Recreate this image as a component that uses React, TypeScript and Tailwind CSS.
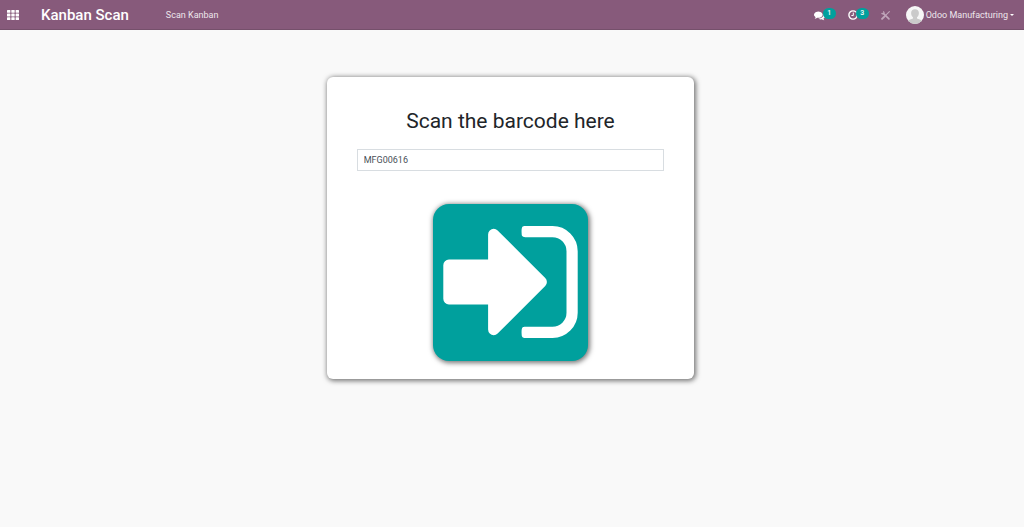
import { useState } from 'react'

function AppsIcon() {
  return (
    <svg viewBox="0 0 12 10" className="h-[10px] w-3 fill-white" aria-hidden="true">
      {[0, 4.3, 8.6].map((x) =>
        [0, 3.6, 7.2].map((y) => <rect key={`${x}-${y}`} x={x} y={y} width="3.4" height="2.8" rx="0.5" />),
      )}
    </svg>
  )
}

function CommentsIcon() {
  return (
    <svg viewBox="0 0 1792 1792" className="size-[11px] fill-white" aria-hidden="true">
      <path d="M1408 768q0 139-94 257t-256.5 186.5-353.5 68.5q-86 0-176-16-124 88-278 128-36 9-86 16h-3q-11 0-20.5-8t-11.5-21q-1-3-1-6.5t.5-6.5 2-6l2.5-5 3.5-5.5 4-5 4.5-5 4-4.5q5-6 23-25t26-29.5 22.5-29 25-38.5 20.5-44q-124-72-195-177t-71-224q0-139 94-257t256.5-186.5 353.5-68.5 353.5 68.5 256.5 186.5 94 257zm384 256q0 120-71 224.5t-195 176.5q10 24 20.5 44t25 38.5 22.5 29 26 29.5 23 25q1 1 4 4.5t4.5 5 4 5 3.5 5.5l2.5 5 2 6 .5 6.5-1 6.5q-3 14-13 22t-22 7q-50-7-86-16-154-40-278-128-90 16-176 16-271 0-472-132 58 4 88 4 161 0 309-45t264-129q125-92 192-212t67-254q0-77-23-152 129 71 204 178t75 230z" />
    </svg>
  )
}

function ClockIcon() {
  return (
    <svg viewBox="0 0 10 10" className="size-[10px] fill-none stroke-white" aria-hidden="true">
      <circle cx="5" cy="5" r="4.1" strokeWidth="1.4" />
      <path d="M5.3 2.6v2.9H3.4" strokeWidth="1" />
    </svg>
  )
}

function ToolsIcon() {
  return (
    <svg viewBox="0 0 10 10" className="size-[9px] fill-none stroke-[#c0a6ba]" aria-hidden="true">
      <path d="M2.6 2.6 8.8 8.8" strokeWidth="1.8" strokeLinecap="round" />
      <path d="M.6 2.4c.8 1 2 .9 2.5.3S3.4 1 2.4.6" strokeWidth="1.3" />
      <path d="M9.3.7 5.6 4.4" strokeWidth="1.2" strokeLinecap="round" />
      <path d="M4 6 1.2 8.8" strokeWidth="2.2" strokeLinecap="round" />
    </svg>
  )
}

function Avatar() {
  return (
    <svg viewBox="0 0 18 18" className="size-[18px] rounded-full" aria-hidden="true">
      <rect width="18" height="18" fill="#f6f6f6" />
      <path
        d="M9 3.2c-2.500 0-3.900 1.500-3.900 3.800 0 1.900.7 3.500 1.900 4.300v1.300c-1.800.6-4 1.200-4.800 2.400V18h13.600v-3c-.8-1.200-3-1.800-4.800-2.400v-1.300c1.200-.8 1.900-2.400 1.900-4.300 0-2.300-1.400-3.800-3.900-3.800z"
        fill="#cacaca"
      />
    </svg>
  )
}

function SignInIcon() {
  return (
    <svg viewBox="0 256 1536 1280" className="h-28 w-[135px] fill-white" aria-hidden="true">
      <path d="M1184 896q0 26-19 45l-544 544q-19 19-45 19t-45-19-19-45v-288h-448q-26 0-45-19t-19-45v-384q0-26 19-45t45-19h448v-288q0-26 19-45t45-19 45 19l544 544q19 19 19 45zm352-352v704q0 119-84.5 203.5t-203.5 84.5h-320q-13 0-22.500-9.500t-9.500-22.500q0-4-1-20t-.5-26.500 3-23.500 10-19.500 20.500-6.500h320q66 0 113-47t47-113v-704q0-66-47-113t-113-47h-312l-11.500-1-11.500-3-8-5.500-7-9-2-13.500q0-4-1-20t-.5-26.500 3-23.500 10-19.500 20.500-6.500h320q119 0 203.500 84.500t84.500 203.500z" />
    </svg>
  )
}

function Badge({ count }: { count: number }) {
  return (
    <span className="-mt-1 -ml-[2px] flex h-[11px] w-[13px] items-center justify-center rounded-full bg-[#00a09d] text-[7px] leading-none font-medium text-white">
      {count}
    </span>
  )
}

function Navbar() {
  return (
    <header className="flex h-[30px] items-center border-b border-[#75506b] bg-[#875a7b] pt-px text-[9px] leading-[14px] text-[#eee6ec]">
      <button type="button" aria-label="Applications" className="ml-[7px]">
        <AppsIcon />
      </button>
      <a href="#" className="ml-[22px] text-[15px] leading-none font-medium text-white">
        Kanban Scan
      </a>
      <nav className="ml-[37px]">
        <a href="#">Scan Kanban</a>
      </nav>
      <div className="mr-[10px] ml-auto flex items-center">
        <button type="button" aria-label="Conversations" className="flex items-center">
          <CommentsIcon />
          <Badge count={1} />
        </button>
        <button type="button" aria-label="Activities" className="ml-3 flex items-center">
          <ClockIcon />
          <Badge count={3} />
        </button>
        <button type="button" aria-label="Developer tools" className="ml-3">
          <ToolsIcon />
        </button>
        <button type="button" className="ml-4 flex items-center gap-[2px]">
          <Avatar />
          <span>Odoo Manufacturing</span>
          <span className="border-x-2 border-t-2 border-x-transparent border-t-white" />
        </button>
      </div>
    </header>
  )
}

export default function App() {
  const [barcode, setBarcode] = useState('MFG00616')

  return (
    <div className="min-h-screen bg-[#f9f9f9] font-['Roboto',sans-serif]">
      <Navbar />
      <main className="pt-[47px] pr-[3px] pb-8">
        <form
          onSubmit={(e) => e.preventDefault()}
          className="mx-auto flex w-[36%] min-w-[280px] flex-col items-center rounded-md bg-white px-[30px] pt-7 pb-[18px] shadow-[1px_1px_5px_1px_#777]"
        >
          <label htmlFor="barcode" className="text-[21px] leading-8 text-[#212529]">
            Scan the barcode here
          </label>
          <input
            id="barcode"
            type="text"
            value={barcode}
            onChange={(e) => setBarcode(e.target.value)}
            className="mt-3 h-[22px] w-full border border-[#d8dde1] bg-white px-[6px] text-[9px] text-[#495057] outline-none"
          />
          <button
            type="submit"
            aria-label="Confirm barcode"
            className="mt-[33px] flex h-[157px] w-[155px] items-center justify-center rounded-2xl bg-[#00a09d] pb-[2px] shadow-[1px_1px_5px_1px_#777]"
          >
            <SignInIcon />
          </button>
        </form>
      </main>
    </div>
  )
}
